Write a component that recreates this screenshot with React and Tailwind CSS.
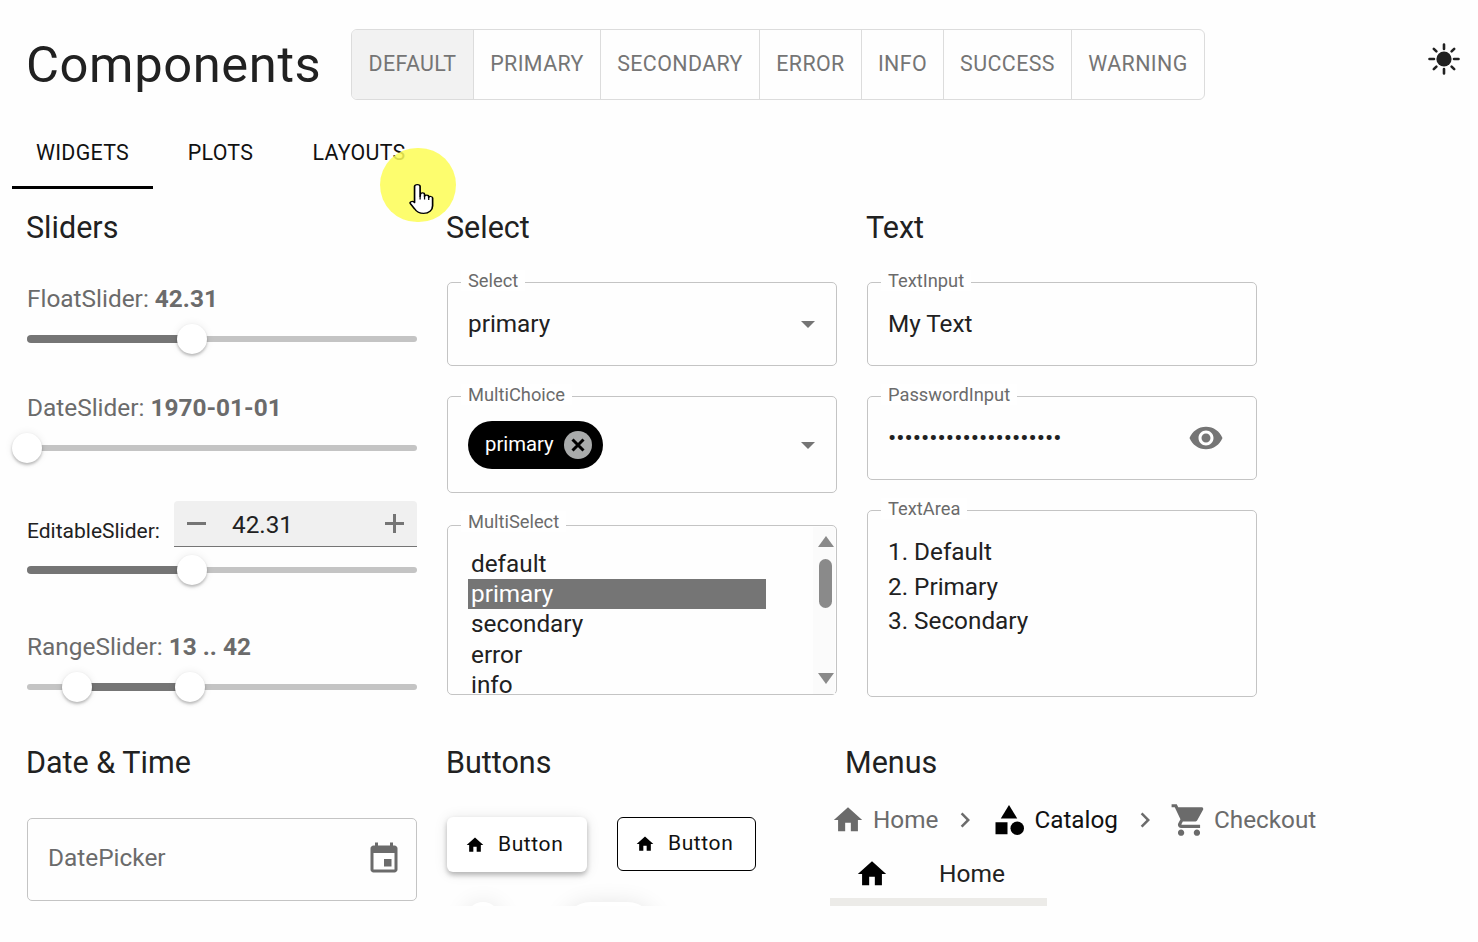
import React from 'react';

const HOME = 'M10 20v-6h4v6h5v-8h3L12 3 2 12h3v8z';
const CART = 'M7 18c-1.1 0-1.99.9-1.99 2S5.9 22 7 22s2-.9 2-2-.9-2-2-2zM1 2v2h2l3.6 7.59-1.35 2.45c-.16.28-.25.61-.25.96 0 1.1.9 2 2 2h12v-2H7.42c-.14 0-.25-.11-.25-.25l.03-.12.9-1.63h7.45c.75 0 1.41-.41 1.75-1.03l3.58-6.49c.08-.14.12-.31.12-.48 0-.55-.45-1-1-1H5.21l-.94-2H1zm16 16c-1.1 0-1.99.9-1.99 2s.89 2 1.99 2 2-.9 2-2-.9-2-2-2z';
const CHEVRON = 'M10 6L8.59 7.41 13.17 12l-4.58 4.59L10 18l6-6z';
const EYE = 'M12 4.5C7 4.5 2.73 7.61 1 12c1.73 4.39 6 7.5 11 7.5s9.27-3.11 11-7.5c-1.73-4.39-6-7.5-11-7.5zM12 17c-2.76 0-5-2.24-5-5s2.24-5 5-5 5 2.24 5 5-2.24 5-5 5zm0-8c-1.66 0-3 1.34-3 3s1.34 3 3 3 3-1.34 3-3-1.34-3-3-3z';
const EVENT = 'M19 3h-1V1h-2v2H8V1H6v2H5c-1.1 0-2 .9-2 2v14c0 1.1.9 2 2 2h14c1.1 0 2-.9 2-2V5c0-1.1-.9-2-2-2zm0 16H5V8h14v11zM12 12h5v5h-5z';
const HAND = 'M6 1.5c1.3 0 2 .8 2 2V13l.2-2.2c.2-1.6 3-1.6 3 .2V13c0-1.6 3-1.6 3 .2v.8c.2-1.4 2.8-1.2 2.8.5V22c0 4-2.5 7.5-6.5 7.5-3.5 0-5-1.5-6.5-4.5L1 20c-.8-1.6 1.2-3 2.6-1.6L4 19V3.5c0-1.2.8-2 2-2z';

const COLORS = [
  { label: 'DEFAULT', w: 'w-[121px]', active: true },
  { label: 'PRIMARY', w: 'w-[127px]' },
  { label: 'SECONDARY', w: 'w-[159px]' },
  { label: 'ERROR', w: 'w-[102px]' },
  { label: 'INFO', w: 'w-[82px]' },
  { label: 'SUCCESS', w: 'w-[128px]' },
  { label: 'WARNING', w: 'w-[133px]' },
];

const OPTIONS = ['default', 'primary', 'secondary', 'error', 'info'];

function Icon({ d, className }) {
  return (
    <svg viewBox="0 0 24 24" fill="currentColor" className={className}>
      <path d={d} />
    </svg>
  );
}

function SunIcon({ className }) {
  return (
    <svg viewBox="0 0 34 34" className={className}>
      <circle cx="17" cy="17" r="7.6" fill="#212121" />
      <path
        d="M17 2.5v4.5M17 27v4.5M2.5 17H7M27 17h4.5M6.8 6.8l2.6 2.6M24.6 24.6l2.6 2.6M27.2 6.8l-2.6 2.6M9.4 24.6l-2.6 2.6"
        stroke="#212121"
        strokeWidth="2.6"
        strokeLinecap="round"
      />
    </svg>
  );
}

function Heading({ children, className = '' }) {
  return <h2 className={`ml-[-1px] h-[42px] text-[30.5px] leading-[42px] text-[#212121] ${className}`}>{children}</h2>;
}

function Thumb({ at }) {
  return (
    <div
      className="absolute top-0 h-[30px] w-[30px] -translate-x-1/2 rounded-full bg-white shadow-[0_2px_3px_rgba(0,0,0,0.25),0_0_8px_rgba(0,0,0,0.08)]"
      style={{ left: at }}
    />
  );
}

function Slider({ from = 0, to, className = '' }) {
  return (
    <div className={`relative h-[30px] w-[390px] ${className}`}>
      <div className="absolute left-0 right-0 top-[12px] h-[6px] rounded-full bg-[#c4c4c4]" />
      {to > 0 && (
        <div
          className="absolute top-[11px] h-[8px] rounded-l-full bg-[#757575]"
          style={{ left: from, width: to - from }}
        />
      )}
      {from > 0 && <Thumb at={from} />}
      <Thumb at={to} />
    </div>
  );
}

function SliderLabel({ name, value, className = '' }) {
  return (
    <div className={`h-[30px] text-[24.4px] leading-[30px] text-[#6b6b6b] ${className}`}>
      {name}: <span className="font-bold">{value}</span>
    </div>
  );
}

function Field({ label, labelTop = 'top-[-13px]', className = '', children }) {
  return (
    <div className={`relative w-[390px] rounded-[5px] border border-[#c4c4c4] ${className}`}>
      <span className={`absolute left-[13px] bg-white px-[7px] text-[18.3px] leading-[21px] text-[#6b6b6b] ${labelTop}`}>
        {label}
      </span>
      {children}
    </div>
  );
}

function Caret() {
  return <div className="h-0 w-0 border-x-[7.5px] border-t-[7.5px] border-x-transparent border-t-[#757575]" />;
}

function SliderColumn() {
  return (
    <div className="w-[390px]">
      <Heading>Sliders</Heading>
      <SliderLabel name="FloatSlider" value="42.31" className="mt-[35px]" />
      <Slider to={165} className="mt-[10px]" />
      <SliderLabel name="DateSlider" value="1970-01-01" className="mt-[39px]" />
      <Slider to={0} className="mt-[10px]" />
      <div className="mt-[38px] flex h-[46px] items-end justify-between">
        <span className="pb-[1px] text-[21px] leading-[30px] text-[#212121]">EditableSlider:</span>
        <div className="flex h-[46px] w-[243px] items-center rounded-t-[4px] border-b border-[#757575] bg-[#f0f0f0] pl-[13px] pr-[13px]">
          <span className="h-[2.5px] w-[19px] bg-[#757575]" />
          <span className="ml-[26px] mt-[3px] flex-1 text-[24.3px] text-[#212121]">42.31</span>
          <span className="relative h-[19px] w-[19px]">
            <span className="absolute left-0 top-[8px] h-[2.5px] w-[19px] bg-[#757575]" />
            <span className="absolute left-[8px] top-0 h-[19px] w-[2.5px] bg-[#757575]" />
          </span>
        </div>
      </div>
      <Slider to={165} className="mt-[8px]" />
      <SliderLabel name="RangeSlider" value="13 .. 42" className="mt-[47px]" />
      <Slider from={50} to={163} className="mt-[10px]" />
    </div>
  );
}

function SelectColumn() {
  return (
    <div className="w-[390px]">
      <Heading>Select</Heading>
      <Field label="Select" className="mt-[33px] flex h-[84px] items-center justify-between pl-[20px] pr-[21px]">
        <span className="text-[24.3px] text-[#212121]">primary</span>
        <Caret />
      </Field>
      <Field label="MultiChoice" className="mt-[30px] flex h-[97px] items-center justify-between pl-[20px] pr-[21px]">
        <span className="flex h-[48px] w-[135px] items-center justify-between rounded-full bg-black pl-[17px] pr-[11px] text-[20.3px] text-white">
          <span className="mb-[1px]">primary</span>
          <svg viewBox="0 0 28 28" className="h-[28px] w-[28px]">
            <circle cx="14" cy="14" r="14" fill="#a9abab" />
            <path d="M8.5 8.5l11 11M19.5 8.5l-11 11" stroke="#000" strokeWidth="3" />
          </svg>
        </span>
        <div className="mt-[2px]">
          <Caret />
        </div>
      </Field>
      <Field label="MultiSelect" labelTop="top-[-15px]" className="mt-[32px] flex h-[170px]">
        <div className="ml-[20px] mt-[23px] h-[146px] w-[298px] overflow-hidden text-[24.3px] leading-[30.2px] text-[#212121]">
          {OPTIONS.map((o) => (
            <div key={o} className={`pl-[3px] ${o === 'primary' ? 'bg-[#757575] text-white' : ''}`}>
              {o}
            </div>
          ))}
        </div>
        <div className="ml-auto mr-[1px] mt-[1px] flex h-[167px] w-[22px] flex-col items-center bg-[#fbfbfb] pl-[3px]">
          <div className="mt-[9px] h-0 w-0 border-x-[8px] border-b-[11px] border-x-transparent border-b-[#8a8a8a]" />
          <div className="mt-[12px] h-[49px] w-[13px] rounded-full bg-[#8a8a8a]" />
          <div className="mt-[65px] h-0 w-0 border-x-[8px] border-t-[11px] border-x-transparent border-t-[#8a8a8a]" />
        </div>
      </Field>
    </div>
  );
}

function TextColumn() {
  return (
    <div className="w-[390px]">
      <Heading>Text</Heading>
      <Field label="TextInput" className="mt-[33px] flex h-[84px] items-center pl-[20px]">
        <span className="text-[24.3px] text-[#212121]">My Text</span>
      </Field>
      <Field label="PasswordInput" className="mt-[30px] flex h-[84px] items-center justify-between pl-[20px] pr-[32px]">
        <span className="mt-[1px] text-[24.5px] text-[#212121]">•••••••••••••••••••••</span>
        <Icon d={EYE} className="h-[36px] w-[36px] text-[#757575]" />
      </Field>
      <Field label="TextArea" className="mt-[30px] h-[187px] pl-[20px] pt-[24px] text-[24.3px] leading-[34.5px] text-[#212121]">
        <div>1. Default</div>
        <div>2. Primary</div>
        <div>3. Secondary</div>
      </Field>
    </div>
  );
}

function ButtonsColumn() {
  return (
    <div className="w-[399px]">
      <Heading>Buttons</Heading>
      <div className="mt-[33px] flex gap-[30px]">
        <button className="flex h-[55px] w-[140px] items-center rounded-[6px] bg-white pl-[18px] text-[21px] tracking-[0.6px] text-[#111] shadow-[0_3px_5px_rgba(0,0,0,0.25),0_1px_14px_rgba(0,0,0,0.1)]">
          <Icon d={HOME} className="mr-[13px] h-[20px] w-[20px] text-black" />
          Button
        </button>
        <button className="flex h-[54px] w-[139px] items-center rounded-[6px] border border-black bg-white pl-[17px] text-[21px] tracking-[0.6px] text-[#111]">
          <Icon d={HOME} className="mr-[13px] h-[20px] w-[20px] text-black" />
          Button
        </button>
      </div>
      <div className="mt-[30px] flex gap-[63px] pl-[19px]">
        <div className="h-[55px] w-[34px] rounded-full bg-white shadow-[0_3px_24px_rgba(0,0,0,0.12)]" />
        <div className="h-[55px] w-[92px] rounded-full bg-white shadow-[0_3px_24px_rgba(0,0,0,0.12)]" />
      </div>
    </div>
  );
}

function MenusColumn() {
  return (
    <div>
      <Heading className="!ml-[15px]">Menus</Heading>
      <div className="mt-[16px] flex h-[40px] items-center pl-[1px] text-[24.3px]">
        <Icon d={HOME} className="h-[34px] w-[34px] text-[#6b6b6b]" />
        <span className="ml-[8px] text-[#6b6b6b]">Home</span>
        <Icon d={CHEVRON} className="ml-[12px] h-[30px] w-[30px] text-[#6b6b6b]" />
        <svg viewBox="0 0 24 24" fill="currentColor" className="ml-[11px] h-[36px] w-[36px] text-black">
          <path d="M12 2l-5.5 9h11z" />
          <circle cx="17.5" cy="17.5" r="4.5" />
          <path d="M3 13.5h8v8H3z" />
        </svg>
        <span className="ml-[7px] text-[#111]">Catalog</span>
        <Icon d={CHEVRON} className="ml-[12px] h-[30px] w-[30px] text-[#6b6b6b]" />
        <Icon d={CART} className="ml-[10px] h-[38px] w-[38px] text-[#6b6b6b]" />
        <span className="ml-[6px] text-[#6b6b6b]">Checkout</span>
      </div>
      <div className="mt-[17px] flex h-[34px] items-center pl-[25px] text-[24.5px] text-[#212121]">
        <Icon d={HOME} className="h-[34px] w-[34px] text-black" />
        <span className="ml-[50px]">Home</span>
      </div>
      <div className="mt-[7px] h-[20px] w-[217px] bg-[#ecebe8]" />
    </div>
  );
}

export default function App() {
  return (
    <div className="relative h-[942px] overflow-hidden bg-[#fefefe] font-['Roboto',sans-serif]">
      <div className="h-[906px] overflow-hidden">
        <header className="flex h-[118px] items-start pl-[27px] pt-[29px]">
          <h1 className="ml-[-1px] mr-[1px] h-[71px] w-[324px] text-[50.7px] leading-[71px] tracking-[0.6px] text-[#212121]">
            Components
          </h1>
          <div className="flex h-[71px] overflow-hidden rounded-[6px] border border-[#dcdcdc]">
            {COLORS.map((c, i) => (
              <div
                key={c.label}
                className={`flex items-center justify-center text-[21.4px] tracking-[0.4px] text-[#757575] ${c.w} ${i > 0 ? 'border-l border-[#dcdcdc]' : ''} ${c.active ? 'bg-[#f2f2f2]' : ''}`}
              >
                {c.label}
              </div>
            ))}
          </div>
          <SunIcon className="ml-auto mr-[17px] mt-[13px] h-[34px] w-[34px]" />
        </header>

        <nav className="flex h-[71px] gap-[11px] pl-[12px] text-[21.4px] tracking-[0.3px] text-[#111]">
          <div className="flex h-[71px] w-[141px] items-center justify-center border-b-[3px] border-black pt-[2px]">WIDGETS</div>
          <div className="flex h-[68px] w-[113px] items-center justify-center pt-[2px]">PLOTS</div>
          <div className="flex h-[68px] w-[142px] items-center justify-center pt-[2px]">LAYOUTS</div>
        </nav>

        <div className="mt-[18px] flex gap-[30px] pl-[27px]">
          <SliderColumn />
          <SelectColumn />
          <TextColumn />
        </div>

        <div className="mt-[40px] flex pl-[27px]">
          <div className="mr-[30px] w-[390px]">
            <Heading>Date &amp; Time</Heading>
            <div className="mt-[34px] flex h-[83px] items-center justify-between rounded-[5px] border border-[#c4c4c4] pb-[2px] pl-[20px] pr-[14px]">
              <span className="text-[24.4px] text-[#6b6b6b]">DatePicker</span>
              <Icon d={EVENT} className="h-[36px] w-[36px] text-[#6b6b6b]" />
            </div>
          </div>
          <ButtonsColumn />
          <div className="ml-[-16px]">
            <MenusColumn />
          </div>
        </div>
      </div>

      {/* screen recorder's cursor highlight */}
      <div className="absolute left-[380px] top-[148px] h-[74px] w-[76px] rounded-full bg-[#fdfd55]/85" />
      <svg viewBox="0 0 18 31" preserveAspectRatio="none" className="absolute left-[409px] top-[183px] h-[32px] w-[25px]">
        <path d={HAND} fill="#fff" stroke="#000" strokeWidth="1.2" strokeLinejoin="round" />
        <path d="M8 13v3M11.2 13v3M14.2 14v2.5" stroke="#000" strokeWidth="0.9" fill="none" />
      </svg>
    </div>
  );
}
